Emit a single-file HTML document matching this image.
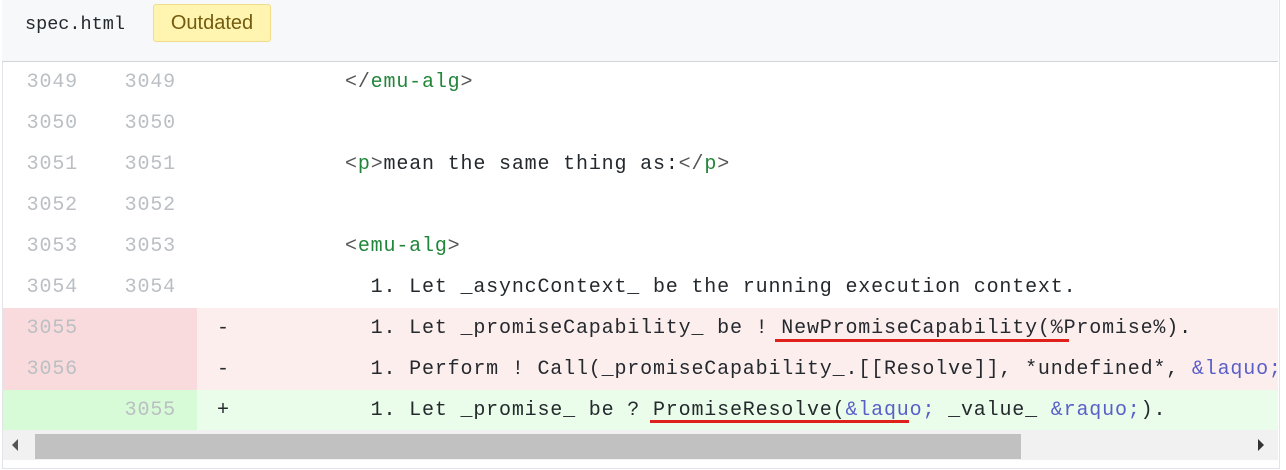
<!DOCTYPE html>
<html><head><meta charset="utf-8"><style>
body{margin:0;width:1286px;height:470px;background:#fff;overflow:hidden;font-family:"Liberation Mono",monospace;}
.box{position:absolute;left:2px;top:0;width:1276px;height:468px;border:1px solid #e1e4e8;border-top:none;}
.hdr{position:absolute;left:2px;top:0;width:1276px;height:61px;background:#f6f8fa;border-bottom:1px solid #d1d5da;}
.fn{position:absolute;left:23px;top:14px;font-size:18.5px;color:#24292e;}
.badge{position:absolute;left:151px;top:4px;width:116px;height:36px;background:#fff5b1;border:1px solid #f0dc8a;border-radius:3px;font-family:"Liberation Sans",sans-serif;font-size:20px;color:#735c0f;text-align:center;line-height:36px;}
.row{position:absolute;left:3px;width:1275px;height:41px;font-size:20px;letter-spacing:0.83px;line-height:42px;white-space:pre;color:#24292e;}
.n1,.n2{position:absolute;top:0;width:60px;text-align:right;color:#bbbfc4;}
.n1{left:15px}.n2{left:113px}
.g{position:absolute;left:0;top:0;width:194px;height:41px;}
.m{position:absolute;left:214px;top:0;}
.c{position:absolute;left:342px;top:0;}
.del{background:#fdeeee}.del .g{background:#f9dbdd}
.add{background:#eafdea}.add .g{background:#d6fbd6}
.t{color:#22863a}.p{color:#555}.b{color:#5a5fc8}
.ul{position:absolute;height:3px;background:#e0201a;}
.sb{position:absolute;left:3px;top:430px;width:1275px;height:30px;background:#f1f1f1;}
.th{position:absolute;left:35px;top:434px;width:986px;height:25px;background:#c1c1c1;}
</style></head><body>
<div class="box"></div>
<div class="hdr"><div class="fn">spec.html</div><div class="badge">Outdated</div></div>

<div class="row" style="top:62px"><span class="n1">3049</span><span class="n2">3049</span><span class="c"><span class="p">&lt;/</span><span class="t">emu-alg</span><span class="p">&gt;</span></span></div>
<div class="row" style="top:103px"><span class="n1">3050</span><span class="n2">3050</span></div>
<div class="row" style="top:144px"><span class="n1">3051</span><span class="n2">3051</span><span class="c"><span class="p">&lt;</span><span class="t">p</span><span class="p">&gt;</span>mean the same thing as:<span class="p">&lt;/</span><span class="t">p</span><span class="p">&gt;</span></span></div>
<div class="row" style="top:185px"><span class="n1">3052</span><span class="n2">3052</span></div>
<div class="row" style="top:226px"><span class="n1">3053</span><span class="n2">3053</span><span class="c"><span class="p">&lt;</span><span class="t">emu-alg</span><span class="p">&gt;</span></span></div>
<div class="row" style="top:267px"><span class="n1">3054</span><span class="n2">3054</span><span class="c">  1. Let _asyncContext_ be the running execution context.</span></div>
<div class="row del" style="top:308px"><div class="g"></div><span class="n1">3055</span><span class="m">-</span><span class="c">  1. Let _promiseCapability_ be ! NewPromiseCapability(%Promise%).</span></div>
<div class="row del" style="top:349px"><div class="g"></div><span class="n1">3056</span><span class="m">-</span><span class="c">  1. Perform ! Call(_promiseCapability_.[[Resolve]], *undefined*, <span class="b">&amp;laquo;</span></span></div>
<div class="row add" style="top:390px"><div class="g"></div><span class="n2">3055</span><span class="m">+</span><span class="c">  1. Let _promise_ be ? PromiseResolve(<span class="b">&amp;laquo;</span> _value_ <span class="b">&amp;raquo;</span>).</span></div>
<div class="ul" style="left:775px;top:339px;width:294px"></div>
<div class="ul" style="left:650px;top:420px;width:259px"></div>
<div class="sb"></div><div class="th"></div>
<div style="position:absolute;left:12px;top:439px;width:0;height:0;border-top:6px solid transparent;border-bottom:6px solid transparent;border-right:6px solid #555"></div>
<div style="position:absolute;left:1258px;top:439px;width:0;height:0;border-top:6px solid transparent;border-bottom:6px solid transparent;border-left:6px solid #333"></div>
</body></html>
